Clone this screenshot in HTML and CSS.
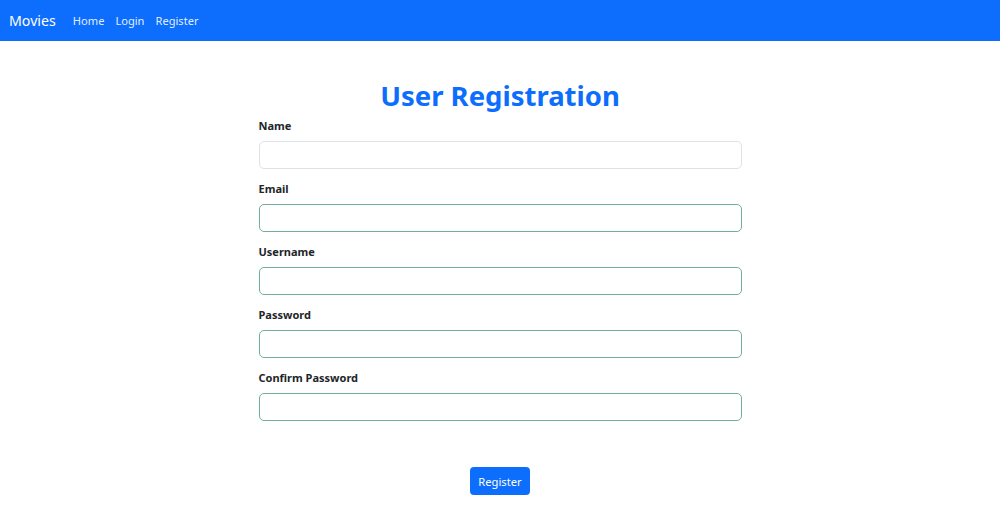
FILE: index.html
```html
<!DOCTYPE html>
<html>
<head>
<meta charset="utf-8">
<link rel="stylesheet" href="styles.css">
</head>
<body>
<nav class="navbar">
  <a class="brand" href="#">Movies</a>
  <a class="nav-link" href="#">Home</a>
  <a class="nav-link" href="#">Login</a>
  <a class="nav-link" href="#">Register</a>
</nav>
<main class="container">
  <h1 class="title">User Registration</h1>
  <form class="form">
    <div class="group">
      <label>Name</label>
      <input class="input plain" type="text">
    </div>
    <div class="group">
      <label>Email</label>
      <input class="input valid" type="text">
    </div>
    <div class="group">
      <label>Username</label>
      <input class="input valid" type="text">
    </div>
    <div class="group">
      <label>Password</label>
      <input class="input valid" type="password">
    </div>
    <div class="group">
      <label>Confirm Password</label>
      <input class="input valid" type="password">
    </div>
    <div class="actions">
      <button class="btn" type="button">Register</button>
    </div>
  </form>
</main>
</body>
</html>
```
FILE: styles.css
```css
* { box-sizing: border-box; }
body {
  margin: 0;
  font-family: "Noto Sans", "Open Sans", sans-serif;
  color: #212529;
  background: #fff;
  font-size: 12px;
}
.navbar {
  height: 41px;
  background: #0d6efd;
  display: flex;
  align-items: center;
  padding: 0 9px;
}
.brand {
  color: #fff;
  text-decoration: none;
  font-size: 14.2px;
  margin-right: 17px;
}
.nav-link {
  color: rgba(255,255,255,0.9);
  text-decoration: none;
  font-size: 11.1px;
  margin-right: 11px;
}
.container {
  width: 483px;
  margin: 0 auto;
}
.title {
  margin: 0;
  padding-top: 35px;
  text-align: center;
  color: #0d6efd;
  font-size: 27.5px;
  font-weight: 700;
  line-height: 40px;
}
.form {
  display: flex;
  flex-direction: column;
  gap: 12px;
  margin-top: 2px;
}
.group {
  display: flex;
  flex-direction: column;
  gap: 7px;
}
.group label {
  font-weight: 700;
  font-size: 11px;
  line-height: 16px;
}
.input {
  height: 28px;
  width: 100%;
  border-radius: 5px;
  border: 1px solid #dee2e6;
  background: #fff;
  font: inherit;
  padding: 0 10px;
}
.input.valid {
  border-color: #72aea0;
}
.actions {
  display: flex;
  justify-content: center;
  margin-top: 34px;
}
.btn {
  background: #0d6efd;
  color: #fff;
  border: none;
  border-radius: 4px;
  font-family: inherit;
  font-size: 11.2px;
  height: 28px;
  width: 60px;
  padding: 0;
}
```
